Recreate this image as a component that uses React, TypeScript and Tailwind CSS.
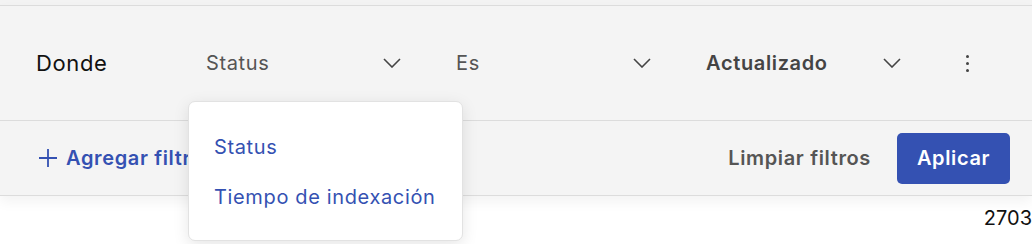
import React from 'react'

function Chevron() {
  return (
    <svg width="18" height="10" viewBox="0 0 18 10" fill="none" className="shrink-0">
      <path d="M1 1l8 8 8-8" stroke="#444" strokeWidth="1.6" />
    </svg>
  )
}

function Select({ label, bold }: { label: string; bold?: boolean }) {
  return (
    <div className="flex items-center justify-between w-[228px] h-[48px] pl-4 pr-[17px]">
      <span className={bold ? 'text-[20px] font-semibold text-[#444]' : 'text-[20px] text-[#555]'}>{label}</span>
      <Chevron />
    </div>
  )
}

export default function App() {
  return (
    <div className="relative w-[1032px] h-[244px] bg-white overflow-hidden font-['Inter',sans-serif] tracking-[0.04em]">
      <div className="h-[5px] bg-[#f3f3f3]" />
      <div className="bg-[#f4f4f4] border-y border-[#dcdcdc] shadow-[0_6px_12px_rgba(0,0,0,0.05)]">
        {/* condition row */}
        <div className="flex items-center h-[114px] pl-9">
          <span className="w-[154px] text-[22px] text-[#111]">Donde</span>
          <div className="flex items-center gap-[22px]">
            <Select label="Status" />
            <Select label="Es" />
            <Select label="Actualizado" bold />
          </div>
          <div className="ml-[48px] flex flex-col gap-[4px]">
            <span className="w-[3px] h-[3px] bg-[#444] rounded-full" />
            <span className="w-[3px] h-[3px] bg-[#444] rounded-full" />
            <span className="w-[3px] h-[3px] bg-[#444] rounded-full" />
          </div>
        </div>
        {/* actions row */}
        <div className="flex items-center h-[75px] border-t border-[#dcdcdc] pl-[38px] pr-[22px]">
          <button className="flex items-center gap-[8px] text-[20px] font-semibold text-[#3451b2]">
            <svg width="20" height="20" viewBox="0 0 20 20" fill="none">
              <path d="M10 1v18M1 10h18" stroke="#3451b2" strokeWidth="1.8" />
            </svg>
            Agregar filtro
          </button>
          <div className="ml-auto flex items-center gap-[26px]">
            <button className="text-[20px] font-semibold text-[#555]">Limpiar filtros</button>
            <button className="w-[113px] h-[51px] rounded-[5px] bg-[#3451b2] text-white text-[20px] font-semibold">Aplicar</button>
          </div>
        </div>
      </div>
      <div className="flex justify-end pt-[9px] text-[20px] text-[#111] leading-[26px] tracking-normal">2703</div>

      {/* field menu */}
      <div className="absolute left-[188px] top-[101px] w-[275px] h-[140px] bg-white border border-[#e2e2e2] rounded-[7px] shadow-[0_4px_16px_rgba(0,0,0,0.10)] py-[20px]">
        <div className="h-[50px] flex items-center px-[25px] text-[20px] text-[#3451b2]">Status</div>
        <div className="h-[50px] flex items-center px-[25px] text-[20px] text-[#3451b2]">Tiempo de indexación</div>
      </div>
    </div>
  )
}
